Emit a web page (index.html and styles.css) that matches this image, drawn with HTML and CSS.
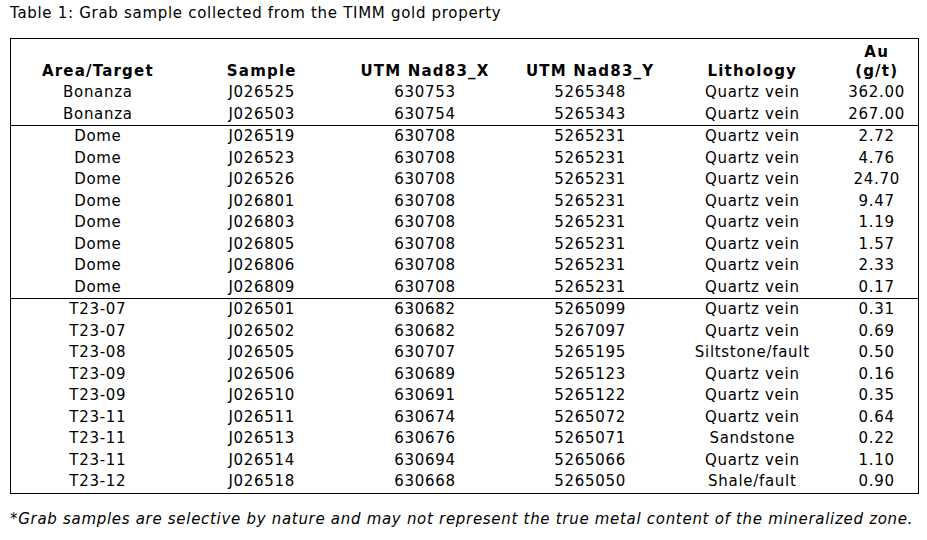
FILE: index.html
```html
<!DOCTYPE html>
<html>
<head>
<meta charset="utf-8">
<link rel="stylesheet" href="styles.css">
</head>
<body>
<p class="caption">Table 1: Grab sample collected from the TIMM gold property</p>
<table class="grab">
<colgroup>
<col class="c1"><col class="c2"><col class="c3"><col class="c4"><col class="c5"><col class="c6">
</colgroup>
<thead>
<tr><th>Area/Target</th><th>Sample</th><th>UTM Nad83_X</th><th>UTM Nad83_Y</th><th>Lithology</th><th>Au<br>(g/t)</th></tr>
</thead>
<tbody>
<tr><td>Bonanza</td><td>J026525</td><td>630753</td><td>5265348</td><td>Quartz vein</td><td>362.00</td></tr>
<tr><td>Bonanza</td><td>J026503</td><td>630754</td><td>5265343</td><td>Quartz vein</td><td>267.00</td></tr>
</tbody>
<tbody>
<tr><td>Dome</td><td>J026519</td><td>630708</td><td>5265231</td><td>Quartz vein</td><td>2.72</td></tr>
<tr><td>Dome</td><td>J026523</td><td>630708</td><td>5265231</td><td>Quartz vein</td><td>4.76</td></tr>
<tr><td>Dome</td><td>J026526</td><td>630708</td><td>5265231</td><td>Quartz vein</td><td>24.70</td></tr>
<tr><td>Dome</td><td>J026801</td><td>630708</td><td>5265231</td><td>Quartz vein</td><td>9.47</td></tr>
<tr><td>Dome</td><td>J026803</td><td>630708</td><td>5265231</td><td>Quartz vein</td><td>1.19</td></tr>
<tr><td>Dome</td><td>J026805</td><td>630708</td><td>5265231</td><td>Quartz vein</td><td>1.57</td></tr>
<tr><td>Dome</td><td>J026806</td><td>630708</td><td>5265231</td><td>Quartz vein</td><td>2.33</td></tr>
<tr><td>Dome</td><td>J026809</td><td>630708</td><td>5265231</td><td>Quartz vein</td><td>0.17</td></tr>
</tbody>
<tbody>
<tr><td>T23-07</td><td>J026501</td><td>630682</td><td>5265099</td><td>Quartz vein</td><td>0.31</td></tr>
<tr><td>T23-07</td><td>J026502</td><td>630682</td><td>5267097</td><td>Quartz vein</td><td>0.69</td></tr>
<tr><td>T23-08</td><td>J026505</td><td>630707</td><td>5265195</td><td>Siltstone/fault</td><td>0.50</td></tr>
<tr><td>T23-09</td><td>J026506</td><td>630689</td><td>5265123</td><td>Quartz vein</td><td>0.16</td></tr>
<tr><td>T23-09</td><td>J026510</td><td>630691</td><td>5265122</td><td>Quartz vein</td><td>0.35</td></tr>
<tr><td>T23-11</td><td>J026511</td><td>630674</td><td>5265072</td><td>Quartz vein</td><td>0.64</td></tr>
<tr><td>T23-11</td><td>J026513</td><td>630676</td><td>5265071</td><td>Sandstone</td><td>0.22</td></tr>
<tr><td>T23-11</td><td>J026514</td><td>630694</td><td>5265066</td><td>Quartz vein</td><td>1.10</td></tr>
<tr><td>T23-12</td><td>J026518</td><td>630668</td><td>5265050</td><td>Shale/fault</td><td>0.90</td></tr>
</tbody>
</table>
<p class="note">*Grab samples are selective by nature and may not represent the true metal content of the mineralized zone.</p>
</body>
</html>
```
FILE: styles.css
```css
html, body {
  margin: 0;
  padding: 0;
  background: #fff;
}
body {
  padding: 0 10px;
  font-family: "DejaVu Sans", Verdana, sans-serif;
  font-size: 15px;
  letter-spacing: 0.7px;
  color: #000;
}
.caption {
  margin: 0;
  padding-top: 4px;
  height: 34px;
  line-height: 19px;
}
.grab {
  border-collapse: collapse;
  border: 1px solid #000;
  width: 909px;
  table-layout: fixed;
}
.c1 { width: 174px; }
.c2 { width: 154px; }
.c3 { width: 172px; }
.c4 { width: 158px; }
.c5 { width: 166px; }
.c6 { width: 83px; }
.grab th {
  font-weight: bold;
  letter-spacing: 1.2px;
  text-align: center;
  vertical-align: bottom;
  line-height: 19px;
  height: 42px;
  padding: 0 0 1px;
}
.grab td {
  text-align: center;
  padding: 0;
  height: 21.5px;
  line-height: 21.5px;
  white-space: nowrap;
}
.grab tbody + tbody tr:first-child td {
  border-top: 1px solid #000;
}
.note {
  margin: 0;
  padding-top: 16px;
  font-style: italic;
  line-height: 19px;
}
```
